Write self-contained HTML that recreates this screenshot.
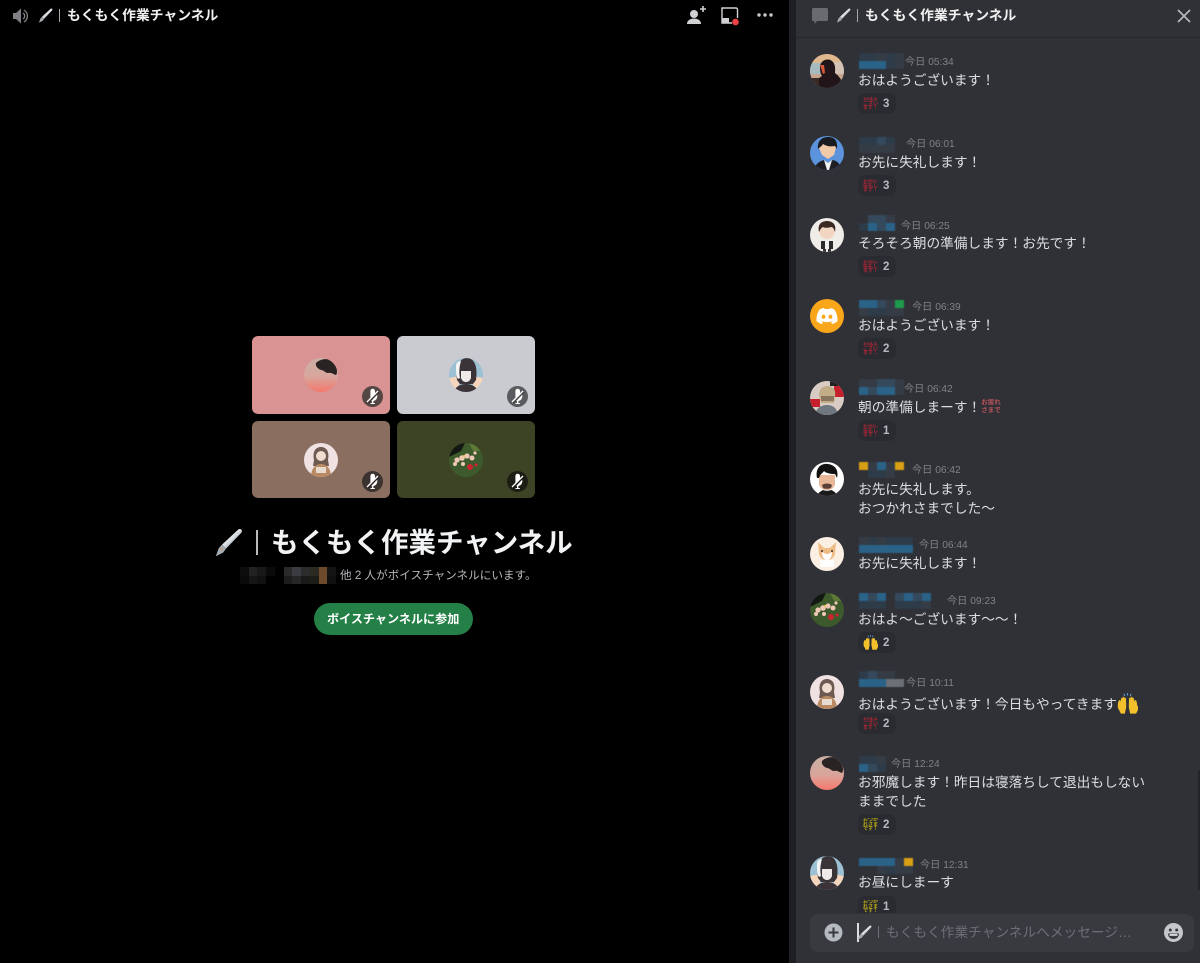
<!DOCTYPE html>
<html lang="ja"><head><meta charset="utf-8"><title>もくもく作業チャンネル</title>
<style>
html,body{margin:0;padding:0;width:1200px;height:963px;overflow:hidden;background:#000}
body{position:relative;font-family:"Liberation Sans","Noto Sans CJK JP",sans-serif;color:#e3e4e7}
.abs,.t,.m,.tm,.n,.r,.av,.tile,.mute{position:absolute}
.t{white-space:nowrap}
#panel{position:absolute;left:796px;top:0;width:404px;height:963px;background:#303136}
#gut{position:absolute;left:789px;top:0;width:7px;height:963px;background:#1e1f22}
.m{left:858px;margin-top:1px;font-size:13.7px;line-height:18.5px;white-space:nowrap;color:#dcdde0}
.tm{font-size:10.2px;line-height:14px;margin-top:1px;color:#808288;white-space:nowrap}
.n{left:859px;display:grid;grid-auto-rows:8px;grid-auto-flow:column;grid-template-rows:8px 8px;filter:blur(.4px)}
.n i{display:block;width:9px;height:8px}
.a{background:#2a6288}.b{background:#34495c}.c{background:#363c46}.d{background:#2e3b48}.g{background:#1e9a4d}.y{background:#d9a016}.o{background:#6d7076}.z{background:transparent}
.r{left:858px;width:38px;height:21px;border-radius:7px;background:#2a2b30;color:#b5bac1;font-size:11.5px;font-weight:700;line-height:22px}
.r span{position:absolute;left:25px}
.e{position:absolute;left:5px;top:4px;width:15px;font-size:5px;line-height:4.600px;font-weight:700;color:#a82636;white-space:nowrap;overflow:hidden;filter:blur(.3px)}
.e.p{color:#b8a815}
.av{width:34px;height:34px;left:810px;border-radius:50%;overflow:hidden}
.av svg,.ta svg{display:block;width:34px;height:34px}
.tile{width:138px;border-radius:6px}
.ta{position:absolute;left:52px;top:22px;width:34px;height:34px;border-radius:50%;overflow:hidden}
.mute{left:110px;top:50px;width:21px;height:21px;border-radius:50%}
.mute svg{display:block;width:21px;height:21px}
</style></head><body>
<svg width="0" height="0" style="position:absolute">
<defs>
<linearGradient id="pg" x1="0" y1="0" x2="1" y2="1"><stop offset="0" stop-color="#5e6670"/><stop offset=".45" stop-color="#e4e8ec"/><stop offset="1" stop-color="#59616b"/></linearGradient>
<linearGradient id="sun" x1="0" y1="0" x2="0" y2="1"><stop offset="0" stop-color="#c9b0a6"/><stop offset=".55" stop-color="#d9a59b"/><stop offset="1" stop-color="#f5786c"/></linearGradient>
</defs>
<symbol id="pen" viewBox="0 0 16 16"><path d="M13.400 .8c.8-.6 2-.2 2 .9 0 .5-.2 .8-.5 1.100L6.700 11.300 4.400 9.200Z" fill="url(#pg)"/><path d="M4.400 9.200 6.700 11.300 5 13.600 1 15.600 2.600 11.200Z" fill="#a4adb5"/><path d="M3.500 11l1.300 1.300" stroke="#c89a5a" stroke-width=".7"/></symbol>
<symbol id="mic" viewBox="0 0 21 21"><g fill="#fff"><path d="M8.400 5a2.300 2.300 0 0 1 4.600 0v2.300l-4.600 4.600Z"/><path d="M13.400 10.400l1.900-1.900v2a4.600 4.600 0 0 1-3.900 4.500V17h1.500v1H8.500v-1H10v-1.700a4.500 4.500 0 0 1-.9-.3Z"/></g><path d="M5 16 16 5" stroke="#fff" stroke-width="1.300"/><path d="M6.200 17.200 17.200 6.200" stroke="#000" stroke-opacity=".4" stroke-width="1"/></symbol>
<symbol id="hands" viewBox="0 0 15 15"><g fill="#f3c02c"><path id="hl" d="M.6 8.800C.6 7 1.200 5 1.900 5c.5 0 .6.800.6 1.300l.6-2.600c.2-.7 1-.6 1 .1l.2-.600c.2-.7 1-.6 1 .1l.1.500c.3-.5 1-.4 1 .3l.2 6-1 4.600H2.800L.6 10.500Z"/><path d="M14.400 8.800c0-1.800-.6-3.800-1.300-3.800-.5 0-.6.800-.6 1.300l-.6-2.600c-.2-.7-1-.6-1 .1l-.2-.600c-.2-.7-1-.6-1 .1l-.1.500c-.3-.5-1-.4-1 .3l-.2 6 1 4.600h4.200l2.200-4.200Z"/></g><path d="M5 .6l.5 1.500M7.500 0v1.800M10 .6 9.500 2.100" stroke="#5c9bd1" stroke-width=".8"/></symbol>
<symbol id="a1" viewBox="0 0 34 34"><rect width="34" height="34" fill="#c7a68f"/><rect width="34" height="10" fill="#e0b88f"/><rect y="9" width="14" height="11" fill="#a6bac0"/><rect x="24" y="8" width="10" height="12" fill="#d4c3b4"/><path d="M10 13c0-7 9-10 13-5 3 4 2 8 2 11 4 3 8 8 9 15H6c0-6 2-10 6-12-2-3-2-6-2-9Z" fill="#21151a"/><path d="M0 24h9v10H0Z" fill="#3a2a26"/><path d="M10 11l3 9 2-1-1-8Z" fill="#d8583a"/></symbol>
<symbol id="a2" viewBox="0 0 34 34"><rect width="34" height="34" fill="#5b93dc"/><path d="M9 12c0-6 4-10 9-10s8 4 8 10l-2 7-6 4-6-4Z" fill="#f0c9a8"/><path d="M8 13C7 5 12 1 18 1s10 3 9 12l-2-3c-5 1-9 0-12-2-1 2-3 3-5 5Z" fill="#1a1c22"/><path d="M4 34c1-6 6-9 10-10l4 3 5-3c4 1 8 4 8 10Z" fill="#1e1f25"/><path d="M14 24l4 3 4-3-3 10h-2Z" fill="#f1f1f1"/></symbol>
<symbol id="a3" viewBox="0 0 34 34"><rect width="34" height="34" fill="#f0ece7"/><circle cx="17" cy="13" r="8" fill="#f2d6c2"/><path d="M9 14C7 5 13 3 17 3s10 2 8 11c-1-3-2-5-4-5-3 1-6 1-8 0-2 1-3 3-4 5Z" fill="#3b2a24"/><path d="M11 23h12v8H11Z" fill="#2a2a2c"/><path d="M15 23h4v8h-4Z" fill="#efefef"/><path d="M13 31h3v3h-3ZM18 31h3v3h-3Z" fill="#333"/></symbol>
<symbol id="dc" viewBox="0 0 34 34"><rect width="34" height="34" fill="#faa61a"/><g transform="translate(6.500 6.500) scale(.875)"><path fill="#fff" d="M20.317 4.3698a19.7913 19.7913 0 00-4.8851-1.5152.0741.0741 0 00-.0785.0371c-.211.3753-.4447.8648-.6083 1.2495-1.8447-.2762-3.68-.2762-5.4868 0-.1636-.3933-.4058-.8742-.6177-1.2495a.077.077 0 00-.0785-.037 19.7363 19.7363 0 00-4.8852 1.515.0699.0699 0 00-.0321.0277C.5334 9.0458-.319 13.5799.0992 18.0578a.0824.0824 0 00.0312.0561c2.0528 1.5076 4.0413 2.4228 5.9929 3.0294a.0777.0777 0 00.0842-.0276c.4616-.6304.8731-1.2952 1.226-1.9942a.076.076 0 00-.0416-.1057c-.6528-.2476-1.2743-.5495-1.8722-.8923a.077.077 0 01-.0076-.1277c.1258-.0943.2517-.1923.3718-.2914a.0743.0743 0 01.0776-.0105c3.9278 1.7933 8.18 1.7933 12.0614 0a.0739.0739 0 01.0785.0095c.1202.099.246.1981.3728.2924a.077.077 0 01-.0066.1276 12.2986 12.2986 0 01-1.873.8914.0766.0766 0 00-.0407.1067c.3604.698.7719 1.3628 1.225 1.9932a.076.076 0 00.0842.0286c1.961-.6067 3.9495-1.5219 6.0023-3.0294a.077.077 0 00.0313-.0552c.5004-5.177-.8382-9.6739-3.5485-13.6604a.061.061 0 00-.0312-.0286zM8.02 15.3312c-1.1825 0-2.1569-1.0857-2.1569-2.419 0-1.3332.9555-2.4189 2.157-2.4189 1.2108 0 2.1757 1.0952 2.1568 2.419 0 1.3332-.9555 2.4189-2.1569 2.4189zm7.9748 0c-1.1825 0-2.1569-1.0857-2.1569-2.419 0-1.3332.9554-2.4189 2.1569-2.4189 1.2108 0 2.1757 1.0952 2.1568 2.419 0 1.3332-.946 2.4189-2.1568 2.4189z"/></g></symbol>
<symbol id="a5" viewBox="0 0 34 34"><rect width="34" height="34" fill="#d8ccc4"/><path d="M24 0h10v16H24ZM0 18h10v8H0Z" fill="#c6202c"/><path d="M9 14C9 7 14 4 19 5s7 5 6 10l-1 7H11Z" fill="#c3ac88"/><path d="M11 15h13v5H11Z" fill="#8a755f"/><path d="M5 34c1-7 6-10 12-10s10 3 11 10Z" fill="#6f7880"/><path d="M20 0h8v5h-8Z" fill="#222"/></symbol>
<symbol id="a6" viewBox="0 0 34 34"><rect width="34" height="34" fill="#fff"/><path d="M9 13h16v10c-2 4-5 5-8 5s-6-1-8-5Z" fill="#e8b898"/><path d="M7 16C5 6 11 1 18 2s11 6 9 14l-2-4c-5 0-9-1-11-3-1 2-4 3-5 7Z" fill="#111"/><path d="M12 23c3-2 7-2 10 0l-1 3c-3 1-6 1-8 0Z" fill="#5a4036"/><path d="M6 34c2-3 5-5 7-6 3 1 5 1 8 0 3 1 5 3 7 6Z" fill="#1a1a1a"/></symbol>
<symbol id="a7" viewBox="0 0 34 34"><rect width="34" height="34" fill="#fbf0e3"/><path d="M8 5l6 6h6l6-6-1 12c-1 4-4 6-8 6s-7-2-8-6Z" fill="#f0bd85"/><path d="M12 15c2 1 3 2 5 2s3-1 5-2c0 5-2 8-5 8s-5-3-5-8Z" fill="#fff"/><path d="M10 23h14v7H10Z" fill="#fff"/><circle cx="12" cy="14" r="1" fill="#333"/><circle cx="22" cy="14" r="1" fill="#333"/></symbol>
<symbol id="a8" viewBox="0 0 34 34"><rect width="34" height="34" fill="#3c5a2c"/><path d="M0 0h16l-4 8-12 6Z" fill="#141812"/><path d="M20 0h14v8H24Z" fill="#5d7a34"/><g fill="#f0c8b6"><circle cx="8" cy="17" r="2.600"/><circle cx="13" cy="15" r="2.800"/><circle cx="18" cy="13" r="2.600"/><circle cx="23" cy="15" r="2.500"/><circle cx="14" cy="21" r="2"/><circle cx="6" cy="21" r="2"/><circle cx="26" cy="10" r="1.600"/></g><circle cx="21" cy="24" r="3" fill="#c9252e"/><circle cx="27" cy="22" r="1.600" fill="#c9252e"/><circle cx="15" cy="13" r="1" fill="#e7d24a"/></symbol>
<symbol id="a9" viewBox="0 0 34 34"><rect width="34" height="34" fill="#f0e2e2"/><path d="M10 17C8 7 13 4 17 4s9 3 7 13l1 6H9Z" fill="#6e5a50"/><circle cx="17" cy="13" r="5" fill="#f1dcd0"/><path d="M7 34c0-8 4-13 10-13s10 5 10 13Z" fill="#b98a63"/><path d="M12 24h10v6H12Z" fill="#e8dcd0"/></symbol>
<symbol id="a10" viewBox="0 0 34 34"><rect width="34" height="34" fill="url(#sun)"/><path d="M12 5c5-5 14-5 17-1 4 4 5 11 3 13-3-1-5-3-8-2-3 0-4-3-7-3-3-1-6-4-5-7Z" fill="#2a2324"/></symbol>
<symbol id="a11" viewBox="0 0 34 34"><rect width="34" height="34" fill="#9cc0d4"/><path d="M0 20l10-2v16H0ZM34 20l-10-2v16h10Z" fill="#f5d6bd"/><path d="M8 22C6 8 11 0 18 0s11 8 9 22l-3 4H11Z" fill="#3a3338"/><path d="M7 8c0 6 0 10 2 13l2-1c-1-5-1-10 1-17-3 0-5 2-5 5Z" fill="#f3f3f3"/><path d="M12 13h10v7c-1 3-3 4-5 4s-4-1-5-4Z" fill="#eeeaea"/><path d="M5 34c1-5 6-8 12-8s11 3 12 8Z" fill="#3c3338"/></symbol>
</svg>

<!-- left top bar -->
<svg class="abs" style="left:12px;top:7px" width="19" height="18" viewBox="0 0 19 18"><path d="M1 6h3l5-4.500v15L4 12H1Z" fill="#7f8186"/><path d="M11 6a3.500 3.500 0 0 1 0 6M12 3a7 7 0 0 1 0 12" fill="none" stroke="#7f8186" stroke-width="1.300"/></svg>
<svg class="abs" style="left:38px;top:8px" width="15" height="15"><use href="#pen"/></svg>
<div class="abs" style="left:59px;top:9px;width:1px;height:13px;background:#a8a8a8"></div>
<div class="t" style="left:67px;top:6px;font-size:13.8px;line-height:19px;font-weight:700;color:#f0f0f0">もくもく作業チャンネル</div>

<!-- top right icons -->
<svg class="abs" style="left:686px;top:5px" width="22" height="20" viewBox="0 0 22 20"><circle cx="8" cy="9" r="4" fill="#d0d1d4"/><path d="M1 19c0-3.500 3-5.500 7-5.500s7 2 7 5.500Z" fill="#d0d1d4"/><path d="M17 1v6M14 4h6" stroke="#d0d1d4" stroke-width="1.600"/></svg>
<svg class="abs" style="left:721px;top:7px" width="20" height="19" viewBox="0 0 20 19"><path d="M2 1h13a1.500 1.500 0 0 1 1.500 1.500V11" fill="none" stroke="#cfd0d3" stroke-width="1.400"/><path d="M1 1.500V16h10" fill="none" stroke="#cfd0d3" stroke-width="1.400"/><path d="M1 11h7v5H1Z" fill="#cfd0d3"/><path d="M2.500 1H1v1.500" fill="none" stroke="#cfd0d3" stroke-width="1.400"/><circle cx="14.500" cy="15" r="3.300" fill="#ed4245"/></svg>
<svg class="abs" style="left:756px;top:12px" width="18" height="6"><circle cx="3" cy="3" r="1.700" fill="#c8c9cc"/><circle cx="9" cy="3" r="1.700" fill="#c8c9cc"/><circle cx="15" cy="3" r="1.700" fill="#c8c9cc"/></svg>

<!-- tiles -->
<div class="tile" style="left:252px;top:336px;height:78px;background:#d89392"><div class="ta"><svg><use href="#a10"/></svg></div><div class="mute" style="background:#544643"><svg><use href="#mic"/></svg></div></div>
<div class="tile" style="left:397px;top:336px;height:78px;background:#c9cbd0"><div class="ta"><svg><use href="#a11"/></svg></div><div class="mute" style="background:#5a5b5e"><svg><use href="#mic"/></svg></div></div>
<div class="tile" style="left:252px;top:421px;height:77px;background:#8a6f60"><div class="ta"><svg><use href="#a9"/></svg></div><div class="mute" style="background:#3a3330"><svg><use href="#mic"/></svg></div></div>
<div class="tile" style="left:397px;top:421px;height:77px;background:#3d4425"><div class="ta"><svg><use href="#a8"/></svg></div><div class="mute" style="background:#1c1e14"><svg><use href="#mic"/></svg></div></div>

<!-- center title -->
<svg class="abs" style="left:214px;top:528px" width="29" height="29"><use href="#pen"/></svg>
<div class="abs" style="left:256px;top:530px;width:1.500px;height:25px;background:#b8b8b8"></div>
<div class="t" style="left:271px;top:523px;font-size:27.500px;line-height:40px;font-weight:700;color:#f2f3f5">もくもく作業チャンネル</div>

<!-- blurred names -->
<div class="abs" style="left:240px;top:567px;width:96px;height:17px;display:grid;grid-template-columns:repeat(11,1fr);grid-template-rows:1fr 1fr">
<i style="background:#0d0d0d"></i><i style="background:#222"></i><i style="background:#181818"></i><i style="background:#0a0a0a"></i><i></i><i style="background:#2a2a2a"></i><i style="background:#3b3c42"></i><i style="background:#2c2c2c"></i><i style="background:#2a2a22"></i><i style="background:#6e4a2d"></i><i style="background:#141414"></i>
<i style="background:#0a0a0a"></i><i style="background:#161616"></i><i style="background:#111"></i><i></i><i></i><i style="background:#1c1c1c"></i><i style="background:#262626"></i><i style="background:#1a1a1a"></i><i style="background:#1d1d18"></i><i style="background:#6e4a2d"></i><i style="background:#101010"></i>
</div>
<div class="t" style="left:340px;top:567px;font-size:11.600px;line-height:17px;color:#b5b6ba">他 2 人がボイスチャンネルにいます。</div>

<div class="abs" style="left:314px;top:603px;width:159px;height:32px;border-radius:16px;background:#248046"></div>
<div class="t" style="left:327px;top:610px;font-size:12.100px;line-height:18px;font-weight:700;color:#fff">ボイスチャンネルに参加</div>

<!-- right panel -->
<div id="gut"></div>
<div id="panel"></div>
<div class="abs" style="left:796px;top:37px;width:404px;height:1px;background:#27282c"></div>
<svg class="abs" style="left:811px;top:7px" width="18" height="18" viewBox="0 0 18 18"><path d="M2.500 1h13A1.500 1.500 0 0 1 17 2.500v10a1.500 1.500 0 0 1-1.500 1.500H6l-2.500 3v-3h-1A1.500 1.500 0 0 1 1 12.500v-10A1.500 1.500 0 0 1 2.500 1Z" fill="#696b71"/></svg>
<svg class="abs" style="left:836px;top:8px" width="15" height="15"><use href="#pen"/></svg>
<div class="abs" style="left:857px;top:9px;width:1px;height:13px;background:#a8a8a8"></div>
<div class="t" style="left:865px;top:6px;font-size:13.800px;line-height:19px;font-weight:700;color:#f0f0f0">もくもく作業チャンネル</div>
<svg class="abs" style="left:1176px;top:8px" width="16" height="16"><path d="M2 2l12 12M14 2 2 14" stroke="#b5b7bb" stroke-width="1.700"/></svg>
<div class="abs" style="left:1198px;top:770px;width:2px;height:120px;background:#232428"></div>

<!-- messages -->
<div class="av" style="top:54px"><svg><use href="#a1"/></svg></div>
<div class="n" style="top:53px"><i class="d"></i><i class="a"></i><i class="d"></i><i class="a"></i><i class="c"></i><i class="a"></i><i class="d"></i><i class="d"></i><i class="c"></i><i class="c"></i></div>
<div class="tm" style="left:905px;top:55px">今日 05:34</div>
<div class="m" style="top:71px">おはようございます！</div>
<div class="r" style="top:93px"><div class="e">おはよ<br>ござい<br>ます！</div><span>3</span></div>

<div class="av" style="top:136px"><svg><use href="#a2"/></svg></div>
<div class="n" style="top:137px"><i class="d"></i><i class="c"></i><i class="d"></i><i class="c"></i><i class="b"></i><i class="c"></i><i class="d"></i><i class="c"></i></div>
<div class="tm" style="left:906px;top:137px">今日 06:01</div>
<div class="m" style="top:153px">お先に失礼します！</div>
<div class="r" style="top:175px"><div class="e">お先に<br>失礼し<br>ます！</div><span>3</span></div>

<div class="av" style="top:218px"><svg><use href="#a3"/></svg></div>
<div class="n" style="top:215px"><i class="z"></i><i class="d"></i><i class="b"></i><i class="a"></i><i class="b"></i><i class="b"></i><i class="c"></i><i class="a"></i></div>
<div class="tm" style="left:901px;top:219px">今日 06:25</div>
<div class="m" style="top:234px">そろそろ朝の準備します！お先です！</div>
<div class="r" style="top:256px"><div class="e">お先に<br>失礼し<br>ます！</div><span>2</span></div>

<div class="av" style="top:299px"><svg><use href="#dc"/></svg></div>
<div class="n" style="top:300px"><i class="a"></i><i class="c"></i><i class="a"></i><i class="d"></i><i class="b"></i><i class="d"></i><i class="c"></i><i class="c"></i><i class="g"></i><i class="c"></i></div>
<div class="tm" style="left:912px;top:300px">今日 06:39</div>
<div class="m" style="top:316px">おはようございます！</div>
<div class="r" style="top:338px"><div class="e">おはよ<br>ござい<br>ます！</div><span>2</span></div>

<div class="av" style="top:381px"><svg><use href="#a5"/></svg></div>
<div class="n" style="top:379px"><i class="c"></i><i class="a"></i><i class="c"></i><i class="b"></i><i class="b"></i><i class="a"></i><i class="b"></i><i class="a"></i><i class="c"></i><i class="c"></i></div>
<div class="tm" style="left:904px;top:382px">今日 06:42</div>
<div class="m" style="top:398px">朝の準備しまーす！<span style="display:inline-block;width:20px;height:17px;vertical-align:-4px;overflow:hidden;font-size:6.500px;line-height:8px;font-weight:700;color:#b5535a;filter:blur(.3px)">お疲れ<br>さまで</span></div>
<div class="r" style="top:420px"><div class="e">お先に<br>失礼し<br>ます！</div><span>1</span></div>

<div class="av" style="top:462px"><svg><use href="#a6"/></svg></div>
<div class="n" style="top:462px"><i class="y"></i><i class="z"></i><i class="c"></i><i class="d"></i><i class="a"></i><i class="d"></i><i class="c"></i><i class="c"></i><i class="y"></i><i class="z"></i></div>
<div class="tm" style="left:912px;top:463px">今日 06:42</div>
<div class="m" style="top:480px">お先に失礼します。<br>おつかれさまでした〜</div>

<div class="av" style="top:537px"><svg><use href="#a7"/></svg></div>
<div class="n" style="top:537px"><i class="c"></i><i class="a"></i><i class="d"></i><i class="a"></i><i class="c"></i><i class="a"></i><i class="d"></i><i class="a"></i><i class="d"></i><i class="a"></i><i class="d"></i><i class="a"></i></div>
<div class="tm" style="left:919px;top:538px">今日 06:44</div>
<div class="m" style="top:554px">お先に失礼します！</div>

<div class="av" style="top:593px"><svg><use href="#a8"/></svg></div>
<div class="n" style="top:593px"><i class="a"></i><i class="d"></i><i class="b"></i><i class="d"></i><i class="a"></i><i class="d"></i><i class="z"></i><i class="z"></i><i class="b"></i><i class="d"></i><i class="a"></i><i class="d"></i><i class="b"></i><i class="d"></i><i class="a"></i><i class="c"></i></div>
<div class="tm" style="left:947px;top:594px">今日 09:23</div>
<div class="m" style="top:610px">おはよ〜ございます〜〜！</div>
<div class="r" style="top:632px"><svg class="abs" style="left:5px;top:3px" width="15" height="15"><use href="#hands"/></svg><span>2</span></div>

<div class="av" style="top:675px"><svg><use href="#a9"/></svg></div>
<div class="n" style="top:671px"><i class="d"></i><i class="a"></i><i class="b"></i><i class="a"></i><i class="c"></i><i class="a"></i><i class="c"></i><i class="o"></i><i class="z"></i><i class="o"></i></div>
<div class="tm" style="left:906px;top:676px">今日 10:11</div>
<div class="m" style="top:692px">おはようございます！今日もやってきます<svg style="vertical-align:-5px" width="21" height="21"><use href="#hands"/></svg></div>
<div class="r" style="top:713px"><div class="e">おはよ<br>ござい<br>ます！</div><span>2</span></div>

<div class="av" style="top:756px"><svg><use href="#a10"/></svg></div>
<div class="n" style="top:756px"><i class="d"></i><i class="a"></i><i class="d"></i><i class="b"></i><i class="c"></i><i class="d"></i></div>
<div class="tm" style="left:891px;top:757px">今日 12:24</div>
<div class="m" style="top:773px">お邪魔します！昨日は寝落ちして退出もしない<br>ままでした</div>
<div class="r" style="top:814px"><div class="e p">おつか<br>れさま<br>です！</div><span>2</span></div>

<div class="av" style="top:856px"><svg><use href="#a11"/></svg></div>
<div class="n" style="top:858px"><i class="a"></i><i class="z"></i><i class="a"></i><i class="z"></i><i class="a"></i><i class="c"></i><i class="a"></i><i class="d"></i><i class="c"></i><i class="c"></i><i class="y"></i><i class="c"></i></div>
<div class="tm" style="left:920px;top:858px">今日 12:31</div>
<div class="m" style="top:873px">お昼にしまーす</div>
<div class="r" style="top:896px"><div class="e p">おつか<br>れさま<br>です！</div><span>1</span></div>

<!-- input -->
<div class="abs" style="left:796px;top:913px;width:404px;height:50px;background:#303136"></div>
<div class="abs" style="left:810px;top:914px;width:384px;height:38px;border-radius:8px;background:#383a40"></div>
<svg class="abs" style="left:824px;top:923px" width="19" height="19"><circle cx="9.500" cy="9.500" r="9" fill="#b5bac1"/><path d="M9.500 4.500v10M4.500 9.500h10" stroke="#383a40" stroke-width="2"/></svg>
<div class="abs" style="left:857px;top:923px;width:1.500px;height:19px;background:#dcdde0"></div>
<svg class="abs" style="left:857px;top:925px" width="15" height="15"><use href="#pen"/></svg>
<div class="abs" style="left:878px;top:926px;width:1px;height:12px;background:#6d6f78"></div>
<div class="t" style="left:886px;top:924px;font-size:13.700px;line-height:18px;color:#6d6f78">もくもく作業チャンネルへメッセージ…</div>
<svg class="abs" style="left:1164px;top:923px" width="19" height="19" viewBox="0 0 19 19"><circle cx="9.500" cy="9.500" r="9.500" fill="#c4c7cc"/><circle cx="6.300" cy="7" r="1.500" fill="#383a40"/><circle cx="12.700" cy="7" r="1.500" fill="#383a40"/><path d="M4 10.500h11c0 3.500-2.500 5.500-5.500 5.500S4 14 4 10.500Z" fill="#383a40"/><path d="M5.500 11.200h8v1.500h-8Z" fill="#fff"/></svg>
</body></html>
